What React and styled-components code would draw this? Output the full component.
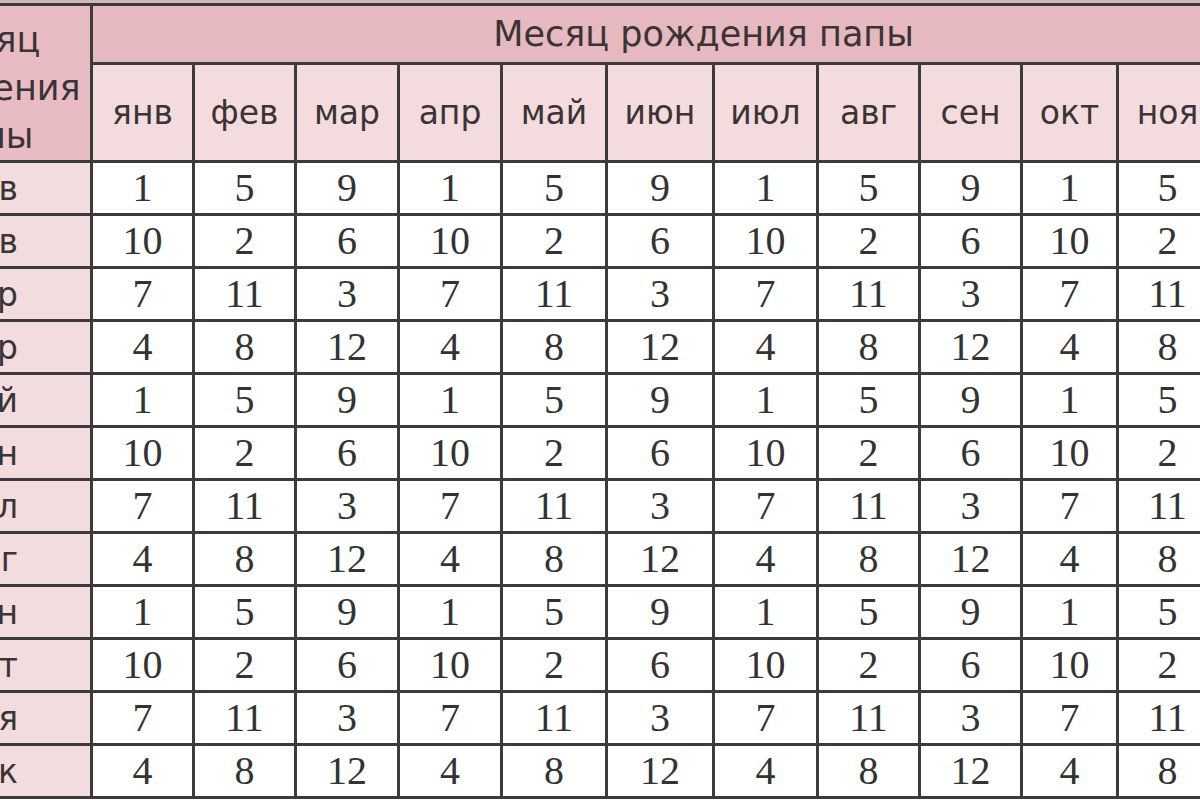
import React from 'react';
import styled, { createGlobalStyle } from 'styled-components';

const GlobalStyle = createGlobalStyle`
    html, body {
        margin: 0;
        padding: 0;
        background: #ffffff;
        overflow: hidden;
    }
`;

const Page = styled.div`
    width: 1200px;
    height: 800px;
    overflow: hidden;
    background: linear-gradient(#cdb9ba 0 3px, #ffffff 3px);
    padding-top: 3px;
    box-sizing: border-box;
`;

const Table = styled.table`
    border-collapse: collapse;
    table-layout: fixed;
    margin-left: -110px;
    width: 1424px;
    font-family: "DejaVu Sans", Verdana, sans-serif;
    color: #3a3434;

    td, th {
        border: 3px solid #3d3a3b;
        padding: 0;
        text-align: center;
        box-sizing: border-box;
        font-weight: normal;
        line-height: 1;
    }
`;

const Corner = styled.th`
    background: #e8bcc2;
    font-size: 35px;
    && {
        line-height: 48px;
        padding: 10px 18px 0 0;
    }
`;

const Title = styled.th`
    background: #e6b8bf;
    font-size: 35px;
    height: 59px;
`;

const MonthHead = styled.th`
    background: #f3dbde;
    font-size: 33px;
    height: 98px;
`;

const RowHead = styled.th`
    background: #f3dcde;
    font-size: 33px;
    height: 53px;
    && {
        text-align: right;
        padding-right: 72px;
    }
`;

const Cell = styled.td`
    background: #ffffff;
    font-family: "Liberation Serif", "Times New Roman", serif;
    font-size: 40px;
    color: #333333;
    height: 53px;
`;

const months = ['янв', 'фев', 'мар', 'апр', 'май', 'июн', 'июл', 'авг', 'сен', 'окт', 'ноя', 'дек'];
const widths = [102, 102, 103, 103, 105, 107, 104, 102, 102, 96, 100, 98];

const cycles = [
    [1, 5, 9],
    [10, 2, 6],
    [7, 11, 3],
    [4, 8, 12],
];

const App = () => (
    <Page>
        <GlobalStyle />
        <Table>
            <colgroup>
                <col style={{ width: 200 }} />
                {widths.map((w, i) => (
                    <col key={i} style={{ width: w }} />
                ))}
            </colgroup>
            <thead>
                <tr>
                    <Corner rowSpan={2}>
                        Месяц
                        <br />
                        рождения
                        <br />
                        мамы
                    </Corner>
                    <Title colSpan={12}>Месяц рождения папы</Title>
                </tr>
                <tr>
                    {months.map((m) => (
                        <MonthHead key={m}>{m}</MonthHead>
                    ))}
                </tr>
            </thead>
            <tbody>
                {months.map((m, i) => (
                    <tr key={m}>
                        <RowHead>{m}</RowHead>
                        {months.map((_, j) => (
                            <Cell key={j}>{cycles[i % 4][j % 3]}</Cell>
                        ))}
                    </tr>
                ))}
            </tbody>
        </Table>
    </Page>
);

export default App;
